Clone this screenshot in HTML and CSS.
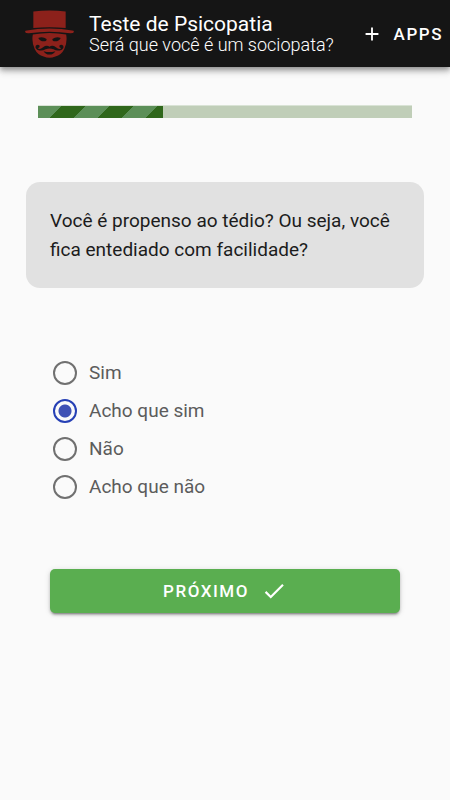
FILE: index.html
```html
<!DOCTYPE html>
<html lang="pt-BR">
<head>
<meta charset="utf-8">
<meta name="viewport" content="width=device-width, initial-scale=1">
<title>Teste de Psicopatia</title>
<link rel="stylesheet" href="styles.css">
</head>
<body>
<header class="bar">
  <svg class="logo" viewBox="0 0 50 50" aria-hidden="true">
    <path class="logo-red" d="M8.500 2.500Q25 .5 41.500 2.500V19.500Q25 17.500 8.500 19.500Z"/>
    <path class="logo-red" d="M0 23.500Q0 22 2 22Q12 19.800 25 19.800T48 22Q50 22 50 23.500Q49 25 46 24.800Q25 21.500 4 24.800Q1 25 0 23.500Z"/>
    <path class="logo-red" d="M8 26Q25 22.800 42 26Q43.500 34 40 41Q37 47 31 48.500Q25 51 19 48.500Q13 47 10 41Q6.500 34 8 26Z"/>
    <path class="logo-dark" d="M13.500 29.500Q18 27.500 22 30.500Q22.500 33 19 33Q15.500 33 13.500 29.500ZM36.500 29.500Q32 27.500 28 30.500Q27.500 33 31 33Q34.500 33 36.500 29.500Z"/>
    <path class="logo-dark" d="M25 38.500Q22 36.500 18.500 39Q15 42 13 40Q15.500 39.500 15 37.500Q13 35.500 11 37.500Q10 40 12.500 41.500Q17 43.500 21 41Q25 39.500 29 41Q33 43.500 37.500 41.500Q40 40 39 37.500Q37 35.500 35 37.500Q34.500 39.500 37 40Q35 42 31.500 39Q28 36.500 25 38.500Z"/>
    <path class="logo-dark" d="M19 43Q25 45 31 43Q29 46.500 25 46.500T19 43Z"/>
  </svg>
  <div class="heading">
    <h1 class="title">Teste de Psicopatia</h1>
    <p class="subtitle">Será que você é um sociopata?</p>
  </div>
  <button class="apps" type="button">
    <svg class="icon" viewBox="0 0 24 24" aria-hidden="true"><path d="M19 13H13V19H11V13H5V11H11V5H13V11H19Z"/></svg>
    Apps
  </button>
</header>
<main class="quiz">
  <div class="progress" role="progressbar" aria-valuemin="0" aria-valuemax="3" aria-valuenow="1" aria-label="Progresso">
    <div class="progress-fill"></div>
  </div>
  <form class="form">
    <p class="question" id="question">Você é propenso ao tédio? Ou seja, você fica entediado com facilidade?</p>
    <div class="options" role="radiogroup" aria-labelledby="question">
      <label class="option"><input class="radio" type="radio" name="answer">Sim</label>
      <label class="option"><input class="radio" type="radio" name="answer" checked>Acho que sim</label>
      <label class="option"><input class="radio" type="radio" name="answer">Não</label>
      <label class="option"><input class="radio" type="radio" name="answer">Acho que não</label>
    </div>
    <button class="next" type="button">Próximo
      <svg class="icon icon-check" viewBox="0 0 24 24" aria-hidden="true"><path d="M21 7L9 19L3.500 13.500L4.910 12.090L9 16.170L19.590 5.590Z"/></svg>
    </button>
  </form>
</main>
</body>
</html>
```

FILE: styles.css
```css
* {
  box-sizing: border-box;
}

body {
  margin: 0;
  background: #fafafa;
  color: #1c1c1c;
  font-family: Roboto, sans-serif;
  font-size: 19px;
}

h1,
p {
  margin: 0;
  font-weight: 400;
}

button {
  border: 0;
  color: #fff;
  font-family: inherit;
  font-weight: 500;
  text-transform: uppercase;
  cursor: pointer;
}

.bar {
  display: flex;
  align-items: center;
  height: 67px;
  padding: 0 7px 0 25px;
  background: #151515;
  color: #fff;
  box-shadow: 0 2px 5px rgba(0, 0, 0, .3), 0 5px 6px rgba(0, 0, 0, .14), 0 1px 12px rgba(0, 0, 0, .12);
}

.logo {
  width: 49px;
  height: 49px;
  margin-right: 15px;
}

.logo-red {
  fill: #8c211b;
}

.logo-dark {
  fill: #151515;
}

.heading {
  flex: 1;
  white-space: nowrap;
}

.title {
  font-size: 21px;
  line-height: 22px;
}

.subtitle {
  font-size: 18px;
  font-weight: 300;
  line-height: 20px;
}

.icon {
  width: 22px;
  height: 22px;
  fill: currentColor;
}

.apps {
  display: flex;
  align-items: center;
  gap: 11px;
  padding: 0;
  background: none;
  font-size: 17px;
  letter-spacing: 0.09em;
}

.quiz {
  padding: 38px 26px;
}

.progress {
  height: 13px;
  margin: 0 12px 64px;
  border: solid #d9e3d5;
  border-width: 1px 0 0;
  background: #c0ceb8;
}

.progress-fill {
  width: calc(100% / 3);
  height: 100%;
  background: #2f671b linear-gradient(135deg, #5c8f58 25%, transparent 0, transparent 50%, #5c8f58 0, #5c8f58 75%, transparent 0) 0 0 / 48px 48px;
}

.question {
  padding: 24px;
  border-radius: 14px;
  background: #e1e1e1;
  line-height: 29px;
}

.options {
  display: grid;
  gap: 10px;
  margin: 71px 25px 68px;
}

.option {
  display: flex;
  align-items: center;
  gap: 11px;
  color: #5c5c5c;
  line-height: 28px;
}

.radio {
  appearance: none;
  width: 24px;
  height: 24px;
  margin: 0 1px 0 2px;
  border: 2px solid #707070;
  border-radius: 50%;
}

.radio:checked {
  border-color: #2640b5;
  background: radial-gradient(circle, #3f51b5 6px, transparent 7px);
}

.next {
  display: flex;
  align-items: center;
  justify-content: center;
  gap: 12px;
  width: calc(100% - 48px);
  height: 44px;
  margin: 0 24px;
  border-radius: 5px;
  background: #5aae50;
  font-size: 17px;
  letter-spacing: 0.09em;
  box-shadow: 0 3px 2px -2px rgba(0, 0, 0, .3), 0 2px 3px rgba(0, 0, 0, .2), 0 1px 6px rgba(0, 0, 0, .12);
}

.icon-check {
  width: 26px;
  height: 26px;
}
```
